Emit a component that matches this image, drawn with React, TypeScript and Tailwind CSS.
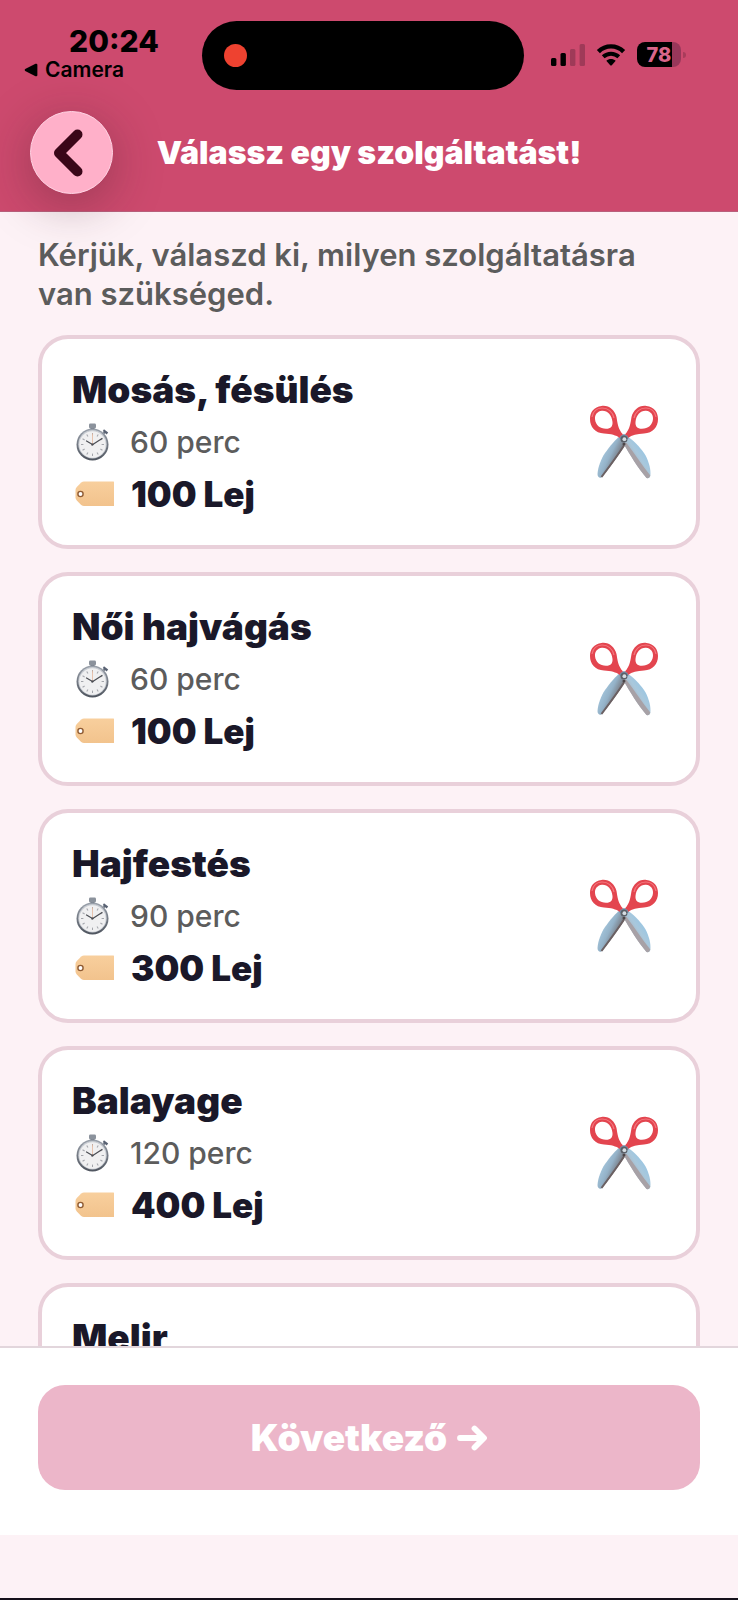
import React from "react";

type Service = { name: string; duration?: string; price?: string };

const services: Service[] = [
  { name: "Mosás, fésülés", duration: "60 perc", price: "100 Lej" },
  { name: "Női hajvágás", duration: "60 perc", price: "100 Lej" },
  { name: "Hajfestés", duration: "90 perc", price: "300 Lej" },
  { name: "Balayage", duration: "120 perc", price: "400 Lej" },
  { name: "Melir" },
];

function Gradients() {
  return (
    <svg className="absolute size-0" aria-hidden="true">
      <defs>
        <linearGradient id="bladeLeft" x1="0" y1="0.2" x2="0.7" y2="0.7">
          <stop offset="0" stopColor="#b4d9f0" />
          <stop offset="0.6" stopColor="#94b2c8" />
          <stop offset="1" stopColor="#6f686b" />
        </linearGradient>
        <linearGradient id="bladeRight" x1="0.9" y1="0.2" x2="0.3" y2="0.8">
          <stop offset="0" stopColor="#8cc4e8" />
          <stop offset="0.5" stopColor="#a9c8dc" />
          <stop offset="1" stopColor="#a8a1a5" />
        </linearGradient>
        <linearGradient id="watchRim" x1="0" y1="0" x2="0" y2="1">
          <stop offset="0" stopColor="#9aa1ab" />
          <stop offset="1" stopColor="#4e545e" />
        </linearGradient>
        <linearGradient id="tagFill" x1="0" y1="0" x2="0" y2="1">
          <stop offset="0" stopColor="#f8cf9d" />
          <stop offset="1" stopColor="#f2c38d" />
        </linearGradient>
      </defs>
    </svg>
  );
}

function Scissors() {
  return (
    <svg viewBox="0 0 70 74" className="h-[74px] w-[70px] shrink-0" aria-hidden="true">
      <path d="M31 31 C27 34 21 41 16 48 C12 54 9 62 8.500 69 C8.500 72 10.500 73.500 12.500 72.500 C20 64 29 51 37 38.500 Z" fill="url(#bladeLeft)" />
      <path d="M36 39 C29 50 20 62 12.500 72" fill="none" stroke="#6b6062" strokeWidth="2" />
      <path d="M34 37.500 L38 31 C44 35 51 42 55 48 C59 54 61.500 62 61.500 69 C61.500 73 59.500 74 57.500 73 C49 63 41 50 34 37.500 Z" fill="url(#bladeRight)" />
      <path d="M34 37.500 C41 50 49 63 57.500 73 C59.500 73.500 60.500 72.500 61.300 70.500 C53 60 45 48 37.500 38 Z" fill="#a7a1a6" />
      <path fillRule="evenodd" clipRule="evenodd" d="M12.500 1 C20 0 25.500 5 27.500 12 C28.500 18 29 24 34 29.500 L31 33 C27 30 22 29 15 28.500 C6 28 1 22 1 14 C1 7 5 2 12.500 1 Z M13 5.800 C8.500 6.300 5.800 9.500 6 14 C6.500 20 11 23.800 17 23.800 C22 23.800 23.800 21 23.500 17 C22.800 10 18.500 5.500 13 5.800 Z" fill="#e3454f" />
      <path fillRule="evenodd" clipRule="evenodd" d="M57.500 1 C50 0 44.500 5 42.500 12 C41.500 18 41 24 36 29.500 L39 33 C43 30 48 29 55 28.500 C64 28 69 22 69 14 C69 7 65 2 57.500 1 Z M57 5.800 C61.500 6.300 64.200 9.500 64 14 C63.500 20 59 23.800 53 23.800 C48 23.800 46.200 21 46.500 17 C47.200 10 51.500 5.500 57 5.800 Z" fill="#e3454f" />
      <path d="M3 12 C4 6.500 8 3 13 3 C19 3 23.500 7 25 13" fill="none" stroke="#f4777f" strokeWidth="1.2" />
      <path d="M45 13 C46.500 7 51 3 57 3 C62 3 66 6.500 67 12" fill="none" stroke="#f4777f" strokeWidth="1.2" />
      <path d="M31.500 31 L35 29 L38.500 31 L39.500 34 H30.500 Z" fill="#6d91ad" />
      <circle cx="35" cy="34" r="3.500" fill="#5b6068" />
      <circle cx="35.400" cy="34.200" r="1.900" fill="#d6dde2" />
      <circle cx="35" cy="39" r="1.500" fill="#4c4648" />
    </svg>
  );
}

const ticks = [0, 30, 60, 90, 120, 150, 180, 210, 240, 270, 300, 330];

function Stopwatch() {
  return (
    <svg viewBox="0 0 34 38" className="h-[38px] w-[34px]" aria-hidden="true">
      <rect x="13" y="0.5" width="7" height="5" rx="1.4" fill="#8b929c" />
      <rect x="14.5" y="5" width="4" height="3" fill="#6b7380" />
      <path d="M27.5 10.5 L29.5 8.5" stroke="#6b7380" strokeWidth="2" />
      <path d="M28 6.2 L32.2 9.6 L30.6 11.4 L26.8 8 Z" fill="#596273" />
      <circle cx="16.5" cy="21.5" r="16" fill="url(#watchRim)" />
      <circle cx="16.5" cy="21.3" r="14.2" fill="#c9cdd3" />
      <circle cx="16.5" cy="21.5" r="13.2" fill="#f0f0f1" />
      {ticks.map((angle) => (
        <path key={angle} d="M16.5 10 V12.4" stroke="#a3a5ab" strokeWidth="1" transform={`rotate(${angle} 16.5 21.5)`} />
      ))}
      <path d="M16.5 21.5 V10.5" stroke="#e4b79d" strokeWidth="0.8" />
      <path d="M16.5 21.5 L10.5 18 M16 22 L26 15.5" stroke="#4b4d53" strokeWidth="1.2" strokeLinecap="round" />
      <circle cx="16.5" cy="21.5" r="1.1" fill="#4b4d53" />
    </svg>
  );
}

function PriceTag() {
  return (
    <svg viewBox="0 0 40 26" className="h-[26px] w-10" aria-hidden="true">
      <path d="M9 0.5 H38.5 Q39 0.5 39 1 V24.5 Q39 25 38.5 25 H9 Q7.5 25 6.200 24 L1.8 19.6 Q0.5 18.2 0.5 16.500 V9 Q0.5 7.300 1.8 5.900 L6.200 1.500 Q7.500 0.5 9 0.5 Z" fill="url(#tagFill)" />
      <circle cx="5.5" cy="13" r="2.6" fill="#fff" stroke="#8f5b33" strokeWidth="1.4" />
    </svg>
  );
}

function StatusIcons() {
  return (
    <div className="flex items-center gap-[11px] pb-[2px] pl-[27px]">
      <svg viewBox="0 0 34 22" className="h-[22px] w-[34px]" role="img" aria-label="Térerő">
        <rect x="0" y="14" width="5.4" height="8" rx="1.5" />
        <rect x="9.5" y="9" width="5.4" height="13" rx="1.5" />
        <rect x="19" y="5" width="5.4" height="17" rx="1.5" fill="#9f3a58" />
        <rect x="28.6" y="0" width="5.4" height="22" rx="1.5" fill="#9f3a58" />
      </svg>
      <svg viewBox="0 0 30 22" className="h-[22px] w-[30px]" role="img" aria-label="Wi-Fi">
        <path d="M2.4 7.6 C9.5 0.6 20.5 0.6 27.6 7.6" fill="none" stroke="#000" strokeWidth="4.4" />
        <path d="M7.2 12.8 C11.8 8.6 18.2 8.6 22.8 12.8" fill="none" stroke="#000" strokeWidth="4" />
        <path d="M10.3 16.8 C13 14.4 17 14.4 19.7 16.8 L15.8 21.2 Q15 22 14.2 21.2 Z" />
      </svg>
      <div className="flex items-center gap-[2px]">
        <div className="flex h-[25px] w-[44px] items-center justify-center rounded-lg bg-linear-to-r from-black from-80% to-[#98375a] to-80% text-[20px] leading-none font-extrabold text-[#d9668a]">
          78
        </div>
        <div className="h-[6px] w-[3px] rounded-r-full bg-[#a83c5b]" />
      </div>
    </div>
  );
}

function ServiceCard({ service }: { service: Service }) {
  return (
    <li className="flex min-h-[214px] shrink-0 justify-between rounded-[30px] border-4 border-[#e9d0da] bg-white py-6 pr-[37px] pl-[30px]">
      <div>
        <h2 className="text-[37px] leading-[54px] font-black text-[#1a1829]">{service.name}</h2>
        {service.duration && (
          <p className="flex h-[50px] items-center text-[30px] font-medium text-[#5c5c5c]">
            <span className="w-[58px] pl-1">
              <Stopwatch />
            </span>
            {service.duration}
          </p>
        )}
        {service.price && (
          <p className="flex h-[54px] items-center text-[35px] font-black text-[#1a1829]">
            <span className="w-[59px] pl-[3px]">
              <PriceTag />
            </span>
            {service.price}
          </p>
        )}
      </div>
      {service.price && (
        <div className="flex items-center">
          <Scissors />
        </div>
      )}
    </li>
  );
}

export default function App() {
  return (
    <div className="flex h-screen flex-col border-b-2 border-[#15101a] bg-[#fdf2f6] font-['Inter','Liberation_Sans',sans-serif]">
      <Gradients />
      <header className="relative z-10 shrink-0 border-b border-[#b9607c] bg-[#cd4a6e] pt-[21px] pb-[17px]">
        <div className="grid h-[69px] grid-cols-[202fr_322fr_214fr] items-center">
          <div className="flex h-full flex-col pt-1 pl-6 text-black">
            <time className="pl-[45px] text-[30px] leading-8 font-extrabold">20:24</time>
            <a href="#camera" className="flex items-center gap-[7px] text-[21px] leading-[26px] font-semibold">
              <svg viewBox="0 0 14 14" className="size-3.5" aria-hidden="true">
                <path d="M1.2 6 L11.5 0.8 Q13.4 0.2 13.4 2 V12 Q13.4 13.8 11.5 13.2 L1.2 8 Q0 7 1.2 6 Z" />
              </svg>
              Camera
            </a>
          </div>
          <div className="flex h-full items-center rounded-full bg-black pl-[22px]">
            <span className="size-[23px] rounded-full bg-[#ee4230]" />
          </div>
          <StatusIcons />
        </div>
        <div className="mt-[21px] grid grid-cols-[83px_1fr_83px] items-center px-[30px]">
          <button
            type="button"
            aria-label="Vissza"
            className="flex size-[83px] items-center justify-center rounded-full border border-[#ffd3e4] bg-[#ffb0c9] shadow-[0_10px_50px_rgba(60,30,40,0.36)]"
          >
            <svg viewBox="0 0 30 48" className="mr-2 h-12 w-[30px]" fill="none" stroke="#3a0618" strokeWidth="10" strokeLinecap="round" strokeLinejoin="round" aria-hidden="true">
              <path d="M24.500 5.5 L6 24 L24.500 42.5" />
            </svg>
          </button>
          <h1 className="text-center text-[32px] leading-10 font-black text-white">Válassz egy szolgáltatást!</h1>
        </div>
      </header>

      <main className="flex min-h-0 flex-1 flex-col overflow-hidden px-[38px] pt-[23px]">
        <p className="pr-8 text-[31px] leading-[39px] font-semibold text-[#5c5c5c]">
          Kérjük, válaszd ki, milyen szolgáltatásra van szükséged.
        </p>
        <ul className="mt-[22px] flex flex-col gap-[23px]">
          {services.map((service) => (
            <ServiceCard key={service.name} service={service} />
          ))}
        </ul>
      </main>

      <footer className="mb-[63px] shrink-0 border-t-2 border-[#e2d6dc] bg-white px-[38px] pt-[37px] pb-[45px]">
        <button
          type="button"
          className="flex h-[105px] w-full items-center justify-center gap-[10px] rounded-[27px] bg-[#ecb6c9] text-[37px] font-black text-white"
        >
          Következő
          <svg viewBox="0 0 30 26" className="h-[26px] w-[30px]" fill="none" stroke="currentColor" strokeWidth="5.8" strokeLinecap="round" strokeLinejoin="round" aria-hidden="true">
            <path d="M3 13 H26 M17.5 3.5 L27 13 L17.5 22.5" />
          </svg>
        </button>
      </footer>
    </div>
  );
}
